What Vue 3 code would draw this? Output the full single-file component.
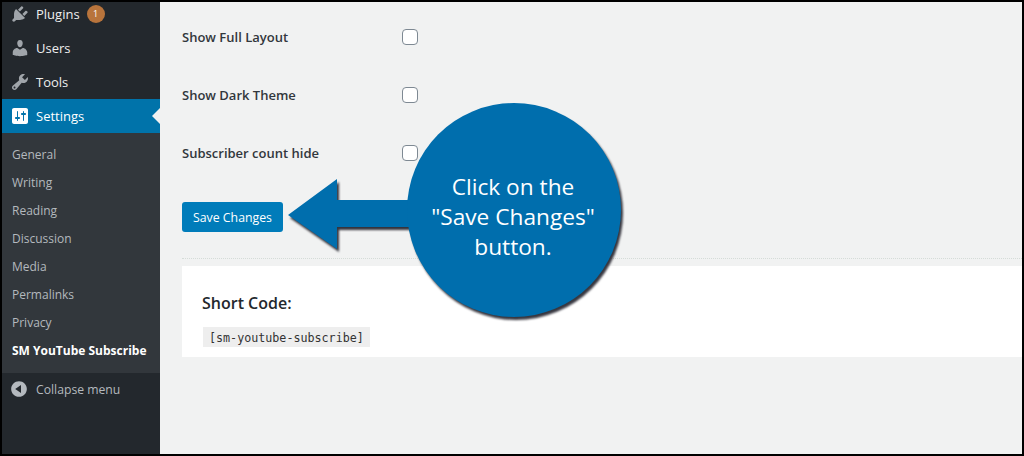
<template>
  <div class="frame">
    <aside class="sidebar">
      <ul class="top-menu">
        <li v-for="item in topItems" :key="item.label" class="top-item" :class="{ current: item.current }">
          <svg class="menu-icon" viewBox="0 0 20 20"><path :d="item.icon" /></svg>
          <span>{{ item.label }}</span>
          <span v-if="item.badge" class="badge">{{ item.badge }}</span>
        </li>
      </ul>
      <ul class="submenu">
        <li v-for="sub in subItems" :key="sub" :class="{ active: sub === 'SM YouTube Subscribe' }">{{ sub }}</li>
      </ul>
      <div class="collapse">
        <svg class="collapse-icon" viewBox="0 0 20 20"><path :d="collapseIcon" /></svg>
        <span>Collapse menu</span>
      </div>
    </aside>

    <main class="content">
      <div v-for="row in rows" :key="row" class="form-row">
        <label>{{ row }}</label>
        <input type="checkbox" class="check" />
      </div>
      <button class="save">Save Changes</button>
      <div class="divider"></div>
      <section class="card">
        <h3>Short Code:</h3>
        <code>[sm-youtube-subscribe]</code>
      </section>
    </main>

    <svg class="arrow" viewBox="0 0 1024 456">
      <path class="shape" d="M288 215 L337 179 L337 200 L420 200 L420 227 L337 227 L337 249 Z" />
      <circle class="shape" cx="514" cy="210" r="107" />
    </svg>
    <div class="callout">Click on the<br />"Save Changes"<br />button.</div>
  </div>
</template>

<script setup>
const topItems = [
  { label: 'Plugins', badge: '1', icon: 'M13.11 4.36L9.87 7.6 8 5.73l3.24-3.24c.35-.34 1.05-.2 1.56.32.52.51.66 1.21.31 1.55zm-8 1.77l.91-1.12 9.01 9.01-1.19.84c-.71.71-2.63 1.16-3.82 1.16H6.14L4.9 17.26c-.59.59-1.54.59-2.12 0-.59-.58-.59-1.53 0-2.12l1.24-1.24v-3.88c0-1.13.4-3.19 1.09-3.89zm7.26 3.97l3.24-3.24c.34-.35 1.04-.21 1.55.31.52.51.66 1.21.31 1.55l-3.24 3.25z' },
  { label: 'Users', icon: 'M10 9.25c-2.27 0-2.73-3.44-2.73-3.44C7 4.02 7.82 2 9.97 2c2.16 0 2.98 2.02 2.71 3.81 0 0-.41 3.44-2.68 3.44zm0 2.57L12.72 10c2.39 0 4.52 2.33 4.52 4.53v2.49s-3.65 1.13-7.24 1.13c-3.65 0-7.24-1.13-7.24-1.13v-2.49c0-2.25 1.94-4.48 4.47-4.48z' },
  { label: 'Tools', icon: 'M16.68 9.77c-1.34 1.34-3.3 1.67-4.95.99l-5.41 6.52c-.99.99-2.59.99-3.58 0s-.99-2.59 0-3.57l6.52-5.42c-.68-1.65-.35-3.61.99-4.95 1.28-1.28 3.12-1.62 4.72-1.06l-2.89 2.89 2.82 2.82 2.86-2.87c.53 1.58.18 3.39-1.08 4.65zM3.81 16.21c.4.39 1.04.39 1.43 0 .4-.4.4-1.04 0-1.43-.39-.4-1.03-.4-1.43 0-.39.39-.39 1.03 0 1.43z' },
  { label: 'Settings', current: true, icon: 'M18 16V4c0-1.1-.9-2-2-2H4c-1.1 0-2 .9-2 2v12c0 1.1.9 2 2 2h12c1.1 0 2-.9 2-2zM8 11h1c.55 0 1 .45 1 1s-.45 1-1 1H8v1.5c0 .28-.22.5-.5.5s-.5-.22-.5-.5V13H6c-.55 0-1-.45-1-1s.45-1 1-1h1V5.5c0-.28.22-.5.5-.5s.5.22.5.5V11zm5-2h-1c-.55 0-1-.45-1-1s.45-1 1-1h1V5.5c0-.28.22-.5.5-.5s.5.22.5.5V7h1c.55 0 1 .45 1 1s-.45 1-1 1h-1v5.5c0 .28-.22.5-.5.5s-.5-.22-.5-.5V9z' },
]
const subItems = ['General', 'Writing', 'Reading', 'Discussion', 'Media', 'Permalinks', 'Privacy', 'SM YouTube Subscribe']
const collapseIcon = 'M10 2.16c4.33 0 7.84 3.51 7.84 7.84s-3.51 7.84-7.84 7.84S2.16 14.33 2.16 10 5.71 2.16 10 2.16zm2 11.72V6.12L6.18 9.97z'
const rows = ['Show Full Layout', 'Show Dark Theme', 'Subscriber count hide']
</script>

<style>
html, body {
  margin: 0;
  background: #000;
}
</style>

<style scoped>
.frame {
  position: relative;
  box-sizing: border-box;
  width: 1024px;
  height: 456px;
  border: 2px solid #000;
  display: flex;
  overflow: hidden;
  background: #f1f2f2;
  font-family: "Open Sans", "Liberation Sans", sans-serif;
}

.sidebar {
  width: 158px;
  flex: none;
  background: #23282d;
  color: #eee;
  font-size: 13px;
}

ul {
  list-style: none;
  margin: 0;
  padding: 0;
}

.top-menu {
  margin-top: -5px;
}

.top-item {
  height: 34px;
  position: relative;
  display: flex;
  align-items: center;
  padding-left: 8px;
}

.menu-icon {
  width: 20px;
  height: 20px;
  margin-right: 6px;
  fill: #a0a5aa;
}

.top-item.current {
  background: #0073aa;
  color: #fff;
}

.top-item.current .menu-icon {
  fill: #fff;
}

.top-item.current::after {
  content: "";
  position: absolute;
  right: 0;
  top: 9px;
  border: 8px solid transparent;
  border-right-color: #f1f2f2;
}

.badge {
  width: 18px;
  height: 18px;
  margin-left: 7px;
  border-radius: 50%;
  background: #b8743c;
  color: #fff;
  font-size: 9px;
  line-height: 18px;
  text-align: center;
}

.submenu {
  background: #32373c;
  padding: 8px 0 8px;
  font-size: 12px;
  color: #b4b9be;
}

.submenu li {
  height: 28px;
  line-height: 28px;
  padding-left: 10px;
}

.submenu li.active {
  color: #fff;
  font-weight: 700;
}

.collapse {
  display: flex;
  align-items: center;
  height: 32px;
  padding-left: 7px;
  font-size: 12.2px;
  color: #b4b9be;
}

.collapse-icon {
  width: 20px;
  height: 20px;
  margin-right: 7px;
  fill: #b4b9be;
}

.content {
  flex: 1;
  padding: 6px 0 0 22px;
  color: #23282d;
}

.form-row {
  height: 58px;
  display: flex;
  align-items: center;
}

.form-row label {
  width: 220px;
  font-size: 13px;
  font-weight: 600;
  color: #32373c;
}

.check {
  appearance: none;
  width: 16px;
  height: 16px;
  margin: 0;
  background: #fff;
  border: 1px solid #7e8993;
  border-radius: 4px;
}

.save {
  display: block;
  width: 101px;
  height: 30px;
  margin-top: 20px;
  padding: 0;
  border: none;
  border-radius: 3px;
  background: #007cba;
  color: #fff;
  font-family: inherit;
  font-size: 12.3px;
}

.divider {
  margin-top: 26px;
  border-top: 1px dotted #d5dcd8;
}

.card {
  margin-top: 7px;
  height: 91px;
  box-sizing: border-box;
  padding: 26px 20px 0;
  background: #fff;
}

.card h3 {
  margin: 0 0 13px;
  font-size: 16px;
  line-height: 22px;
  font-weight: 600;
}

.card code {
  display: block;
  width: fit-content;
  height: 20px;
  line-height: 22px;
  margin-left: 1px;
  padding: 0 6px;
  background: #eee;
  font-family: "DejaVu Sans Mono", monospace;
  font-size: 11.7px;
  color: #333;
}

.arrow {
  position: absolute;
  left: -2px;
  top: -2px;
  width: 1024px;
  height: 456px;
  filter: drop-shadow(2px 3px 1px rgba(20, 20, 30, 0.85));
}

.shape {
  fill: #006ead;
}

.callout {
  position: absolute;
  left: 404px;
  top: 170px;
  width: 214px;
  text-align: center;
  color: #fff;
  font-size: 22.7px;
  line-height: 30px;
}
</style>
